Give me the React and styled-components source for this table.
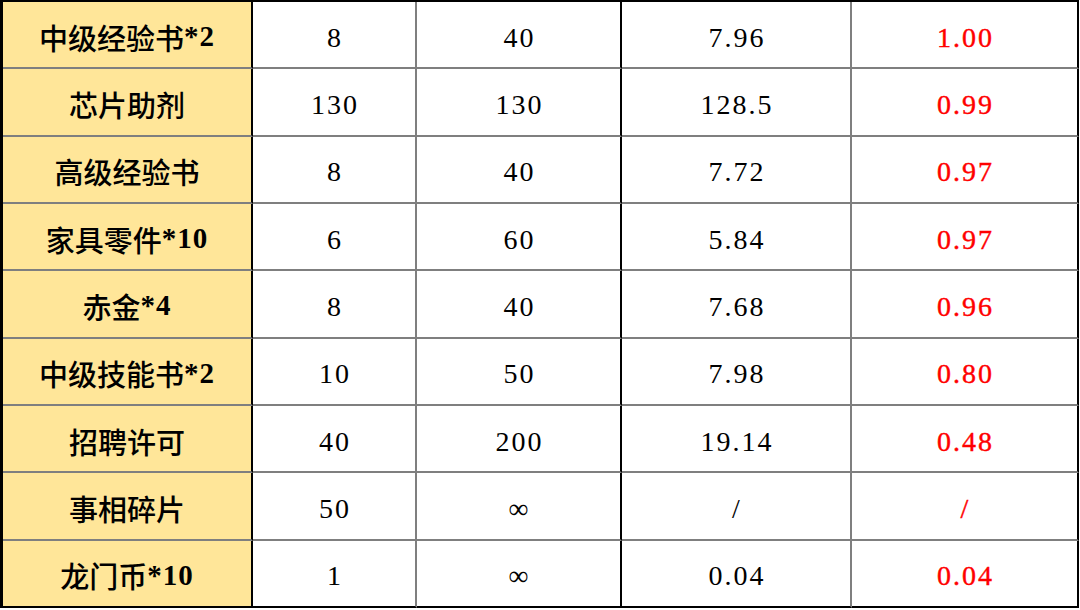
import styled, { createGlobalStyle } from "styled-components"

const GlobalStyle = createGlobalStyle`
  body {
    margin: 0;
    background: #fff;
    font-family: "Liberation Serif", "Noto Sans CJK SC", serif;
  }
`

const Table = styled.div`
  width: 1079px;
  height: 608px;
  box-sizing: border-box;
  display: grid;
  grid-template-columns: 250px 164px 205px 230px 227px;
  grid-template-rows: repeat(9, 1fr);
  border-top: 2px solid #000;
  border-left: 3px solid #000;
`

const Cell = styled.div`
  display: flex;
  align-items: center;
  justify-content: center;
  box-sizing: border-box;
  border-right: 2px solid ${p => (p.$strong ? "#000" : "#7f7f7f")};
  border-bottom: 2px solid ${p => (p.$last ? "#000" : "#7f7f7f")};
  font-size: 28px;
  letter-spacing: 2px;
  text-indent: 2px;
  color: #000;
  padding-top: 6px;
`

const NameCell = styled(Cell)`
  background: #ffe699;
  font-weight: 500;
  font-size: 29px;
  letter-spacing: 0;
  text-indent: 0;
  padding-top: 4px;
`

const Count = styled.span`
  font-weight: 700;
  letter-spacing: 1px;
`

const RatioCell = styled(Cell)`
  color: #ff0000;
  -webkit-text-stroke: 0.4px #ff0000;
`

const rows = [
  ["中级经验书*2", "8", "40", "7.96", "1.00"],
  ["芯片助剂", "130", "130", "128.5", "0.99"],
  ["高级经验书", "8", "40", "7.72", "0.97"],
  ["家具零件*10", "6", "60", "5.84", "0.97"],
  ["赤金*4", "8", "40", "7.68", "0.96"],
  ["中级技能书*2", "10", "50", "7.98", "0.80"],
  ["招聘许可", "40", "200", "19.14", "0.48"],
  ["事相碎片", "50", "∞", "/", "/"],
  ["龙门币*10", "1", "∞", "0.04", "0.04"],
]

function Name({ text }) {
  const [name, count] = text.split("*")
  return (
    <>
      {name}
      {count && <Count>*{count}</Count>}
    </>
  )
}

function App() {
  return (
    <>
      <GlobalStyle />
      <Table>
        {rows.map((row, i) => {
          const last = i === rows.length - 1
          return [
            <NameCell key={i + "a"} $strong $last={last}><Name text={row[0]} /></NameCell>,
            <Cell key={i + "b"} $last={last}>{row[1]}</Cell>,
            <Cell key={i + "c"} $strong $last={last}>{row[2]}</Cell>,
            <Cell key={i + "d"} $last={last}>{row[3]}</Cell>,
            <RatioCell key={i + "e"} $strong $last={last}>{row[4]}</RatioCell>,
          ]
        })}
      </Table>
    </>
  )
}

export default App
